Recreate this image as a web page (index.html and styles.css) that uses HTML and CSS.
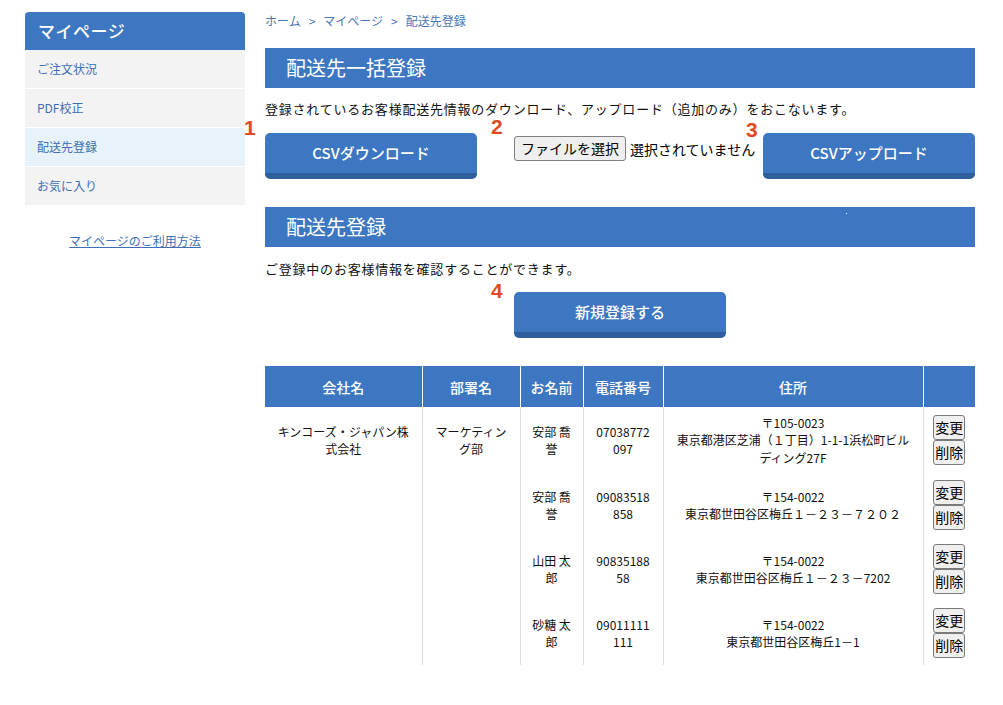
FILE: index.html
```html
<!DOCTYPE html>
<html lang="ja">
<head>
<meta charset="utf-8">
<title>配送先登録 | マイページ</title>
<link rel="stylesheet" href="styles.css">
</head>
<body>
<div class="page">
  <aside class="side">
    <div class="side-box">
      <h2 class="side-title">マイページ</h2>
      <ul class="side-menu">
        <li class="side-item"><a href="#">ご注文状況</a></li>
        <li class="side-item"><a href="#">PDF校正</a></li>
        <li class="side-item is-active"><a href="#">配送先登録</a></li>
        <li class="side-item"><a href="#">お気に入り</a></li>
      </ul>
    </div>
    <p class="side-help"><a href="#">マイページのご利用方法</a></p>
  </aside>

  <main class="main">
    <nav class="crumbs">
      <a href="#">ホーム</a><span class="sep">&gt;</span><a href="#">マイページ</a><span class="sep">&gt;</span><span>配送先登録</span>
    </nav>

    <h2 class="bar">配送先一括登録</h2>
    <p class="lead lead-bulk">登録されているお客様配送先情報のダウンロード、アップロード（追加のみ）をおこないます。</p>

    <div class="csv-row">
      <div class="step step-1">
        <span class="num">1</span>
        <button class="btn" type="button">CSVダウンロード</button>
      </div>
      <div class="step step-2 file">
        <span class="num">2</span>
        <span class="file-btn">ファイルを選択</span>
        <span class="file-name">選択されていません</span>
      </div>
      <div class="step step-3">
        <span class="num">3</span>
        <button class="btn" type="button">CSVアップロード</button>
      </div>
    </div>

    <h2 class="bar bar-list">配送先登録<span class="speck"></span></h2>
    <p class="lead lead-list">ご登録中のお客様情報を確認することができます。</p>

    <div class="new-row">
      <div class="step step-4">
        <span class="num">4</span>
        <button class="btn" type="button">新規登録する</button>
      </div>
    </div>

    <table class="addr">
      <colgroup>
        <col class="c-company"><col class="c-dept"><col class="c-name"><col class="c-tel"><col class="c-addr"><col class="c-act">
      </colgroup>
      <thead>
        <tr><th>会社名</th><th>部署名</th><th>お名前</th><th>電話番号</th><th>住所</th><th></th></tr>
      </thead>
      <tbody>
        <tr>
          <td>キンコーズ・ジャパン株式会社</td>
          <td>マーケティング部</td>
          <td>安部 喬誉</td>
          <td class="tel">07038772097</td>
          <td>〒105-0023<br>東京都港区芝浦（１丁目）1-1-1浜松町ビルディング27F</td>
          <td class="act"><button class="mini" type="button">変更</button><button class="mini" type="button">削除</button></td>
        </tr>
        <tr>
          <td></td>
          <td></td>
          <td>安部 喬誉</td>
          <td class="tel">09083518858</td>
          <td>〒154-0022<br>東京都世田谷区梅丘１－２３－７２０２</td>
          <td class="act"><button class="mini" type="button">変更</button><button class="mini" type="button">削除</button></td>
        </tr>
        <tr>
          <td></td>
          <td></td>
          <td>山田 太郎</td>
          <td class="tel">9083518858</td>
          <td>〒154-0022<br>東京都世田谷区梅丘１－２３－7202</td>
          <td class="act"><button class="mini" type="button">変更</button><button class="mini" type="button">削除</button></td>
        </tr>
        <tr>
          <td></td>
          <td></td>
          <td>砂糖 太郎</td>
          <td class="tel">09011111111</td>
          <td>〒154-0022<br>東京都世田谷区梅丘1－1</td>
          <td class="act"><button class="mini" type="button">変更</button><button class="mini" type="button">削除</button></td>
        </tr>
      </tbody>
    </table>
  </main>
</div>
</body>
</html>
```

FILE: styles.css
```css
* { box-sizing: border-box; }

html, body {
  margin: 0;
  padding: 0;
  background: #fff;
}

body {
  font-family: "Noto Sans CJK JP", "Noto Sans", sans-serif;
  color: #222;
  font-size: 12px;
}

.page {
  display: flex;
  align-items: flex-start;
  gap: 20px;
  padding: 12px 0 0 25px;
}

/* ---------- sidebar ---------- */
.side {
  width: 220px;
  flex: 0 0 220px;
}

.side-box {
  border-radius: 4px 4px 0 0;
  overflow: hidden;
}

.side-title {
  margin: 0;
  height: 38px;
  line-height: 38px;
  padding-left: 13px;
  background: #3e77c1;
  color: #fff;
  font-size: 17px;
  font-weight: 500;
  letter-spacing: 0.5px;
}

.side-menu {
  list-style: none;
  margin: 0;
  padding: 0;
}

.side-item {
  background: #f3f3f3;
  border-top: 1px solid #fff;
}
.side-item:first-child { border-top: 0; }
.side-item.is-active { background: #e8f2fa; }

.side-item a {
  display: block;
  height: 38px;
  line-height: 38px;
  padding-left: 12px;
  color: #3d6fb5;
  text-decoration: none;
  font-size: 12px;
}

.side-help {
  margin: 27px 0 0;
  text-align: center;
  font-size: 12px;
  line-height: 18px;
}
.side-help a {
  color: #3d6fb5;
  text-decoration: underline;
}

/* ---------- main ---------- */
.main {
  width: 710px;
  flex: 0 0 710px;
}

.crumbs {
  height: 18px;
  line-height: 18px;
  font-size: 12px;
  color: #4a76b4;
}
.crumbs a { color: #4a76b4; text-decoration: none; }
.crumbs .sep { margin: 0 8px; }

.bar {
  position: relative;
  margin: 18px 0 0;
  height: 40px;
  line-height: 40px;
  padding-left: 21px;
  background: #3e77c1;
  color: #fff;
  font-size: 20px;
  font-weight: normal;
}
.bar-list { margin-top: 28px; }

.speck {
  position: absolute;
  left: 581px;
  top: 6px;
  width: 1px;
  height: 1px;
  background: #fff;
}

.lead {
  margin: 11px 0 0;
  font-size: 13px;
  letter-spacing: 0.06em;
  line-height: 20px;
  color: #111;
}
.lead-bulk { margin-top: 12px; line-height: 18px; }
.lead-list { margin-top: 12px; }

.csv-row {
  display: flex;
  align-items: flex-start;
  margin-top: 15px;
  height: 46px;
}

.step { position: relative; }

.num {
  position: absolute;
  font-family: "Liberation Sans", Arial, sans-serif;
  font-weight: bold;
  font-size: 21px;
  line-height: 15px;
  color: #e04a1e;
}
.step-1 .num { left: -21px; top: -13px; }
.step-2 .num { left: -23px; top: -17px; }
.step-3 .num { left: -17px; top: -11px; }
.step-4 .num { left: -23px; top: -9px; }

.btn {
  display: block;
  width: 212px;
  height: 46px;
  margin: 0;
  padding: 0;
  border: 0;
  border-bottom: 6px solid #2f5e9c;
  border-radius: 5px;
  background: #3e77c1;
  color: #fff;
  font-family: "Noto Sans CJK JP", "Noto Sans", sans-serif;
  font-size: 15px;
  font-weight: 500;
  line-height: 40px;
}

.file {
  display: flex;
  align-items: center;
  margin: 3px 0 0 37px;
}

.file-btn {
  display: inline-block;
  height: 25px;
  line-height: 23px;
  padding: 0 6px;
  border: 1px solid #808080;
  border-radius: 3px;
  background: #efefef;
  color: #000;
  font-size: 14px;
}

.file-name {
  margin-left: 4px;
  font-size: 14px;
  color: #000;
}

.step-3 { margin-left: auto; }

.new-row {
  display: flex;
  justify-content: center;
  margin-top: 13px;
}

/* ---------- table ---------- */
.addr {
  width: 710px;
  margin-top: 28px;
  border-collapse: collapse;
  table-layout: fixed;
}

.c-company { width: 157px; }
.c-dept { width: 98px; }
.c-name { width: 63px; }
.c-tel { width: 80px; }
.c-addr { width: 260px; }
.c-act { width: 52px; }

.addr th {
  height: 41px;
  padding: 0;
  background: #3e77c1;
  color: #fff;
  font-size: 14px;
  font-weight: 500;
  border-left: 1px solid #fff;
}
.addr th:first-child { border-left: 0; }

.addr td {
  padding: 7px 8px;
  text-align: center;
  vertical-align: middle;
  font-size: 12px;
  line-height: 17.4px;
  color: #111;
  border-left: 1px solid #dedede;
  word-break: break-all;
}
.addr td:first-child { border-left: 0; padding: 7px 12px; }
.addr td.tel { padding: 7px 12px; }
.addr td.act { padding: 7px 0; }

.mini {
  display: block;
  width: 32px;
  height: 25px;
  margin: 0 auto;
  padding: 0;
  border: 1px solid #7a7a7a;
  border-radius: 3px;
  background: #efefef;
  color: #000;
  font-family: "Noto Sans CJK JP", "Noto Sans", sans-serif;
  font-size: 14px;
  line-height: 21px;
}
```
